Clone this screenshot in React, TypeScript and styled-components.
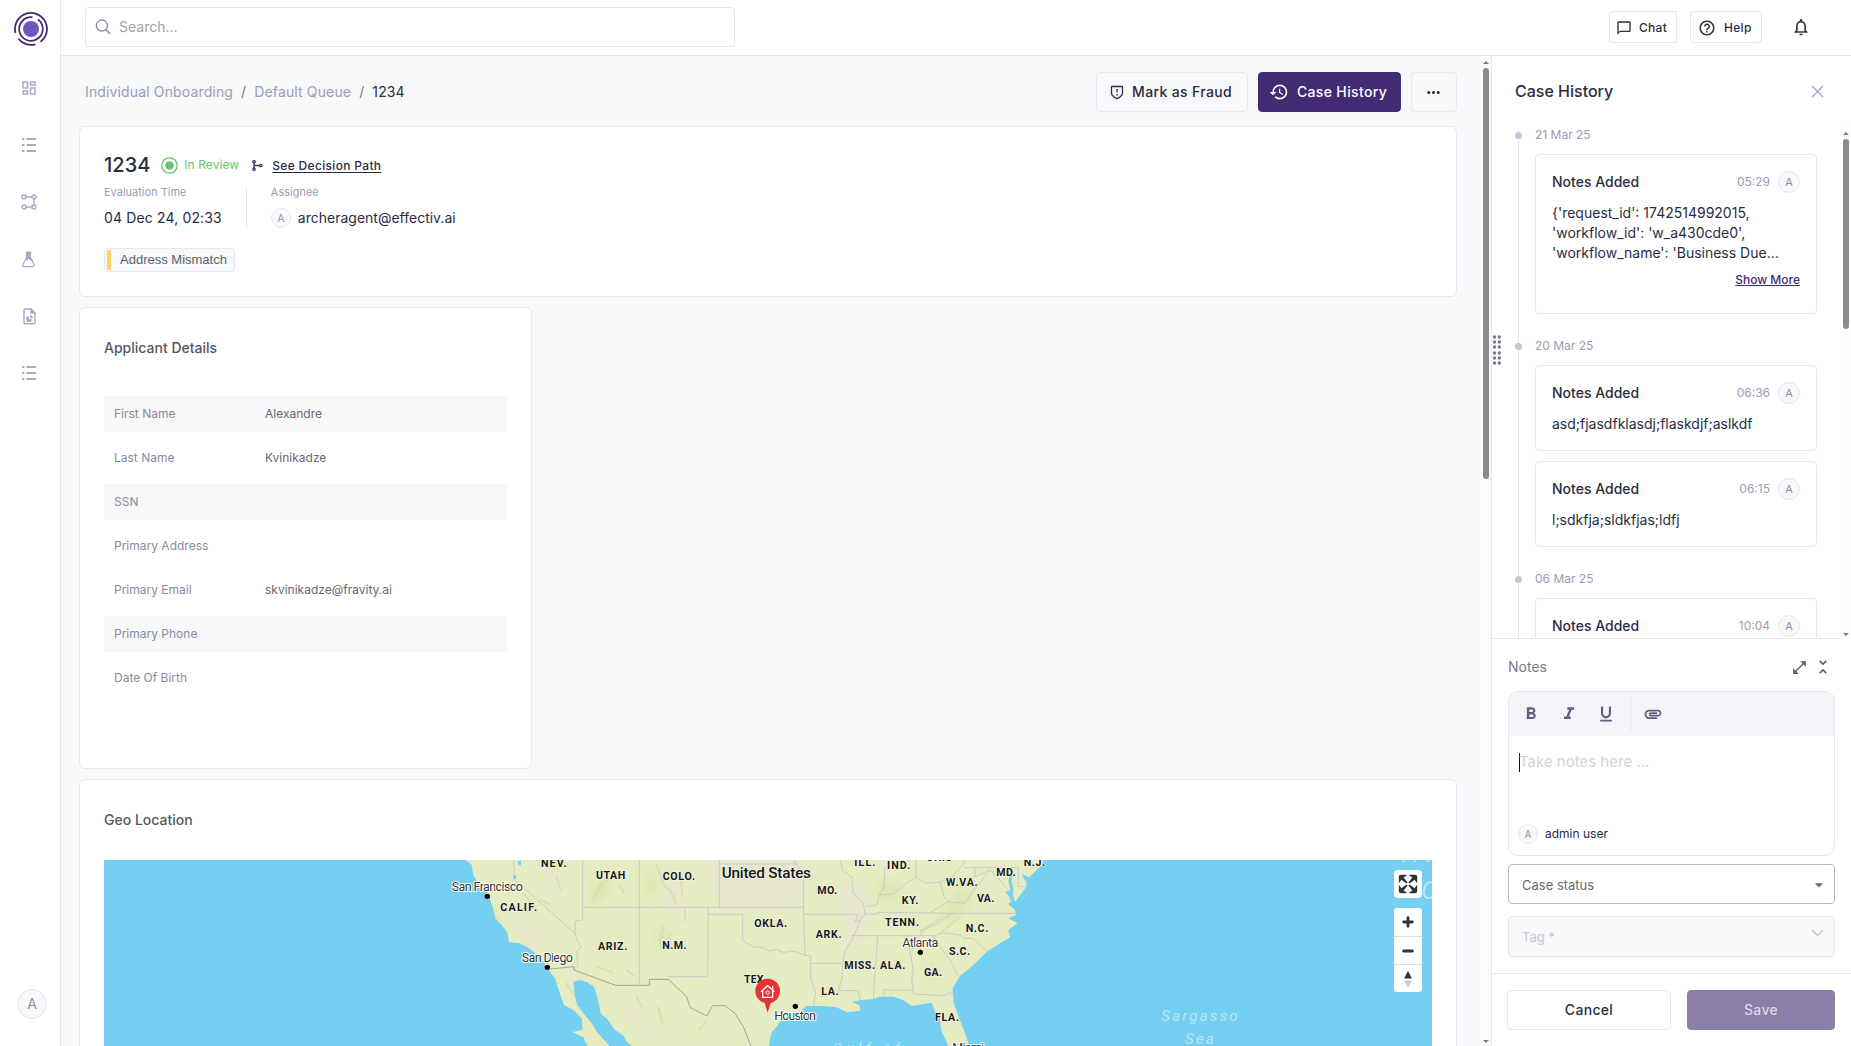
import React from "react";
import styled, { createGlobalStyle, css } from "styled-components";
import {
  MdOutlineDashboard,
  MdChatBubbleOutline,
  MdHelpOutline,
  MdNotificationsNone,
  MdHistory,
  MdMoreHoriz,
  MdFormatBold,
  MdFormatItalic,
  MdFormatUnderlined,
  MdAttachment,
  MdOpenInFull,
  MdUnfoldLess,
  MdArrowDropDown,
} from "react-icons/md";

const line = "#e6e7ef";
const ink = "#2b2d3f";
const muted = "#9a9cb8";
const purple = "#432b74";
const surface = "#f7f8fa";

const GlobalStyle = createGlobalStyle`
  * { box-sizing: border-box; }
  body { margin: 0; background: #fff; font-family: Inter, "Liberation Sans", sans-serif; line-height: 20px; color: ${ink}; }
  button { font-family: inherit; line-height: inherit; padding: 0; margin: 0; cursor: pointer; }
`;

const Shell = styled.div`
  display: grid;
  grid-template-columns: 61px minmax(0, 1fr);
  grid-template-rows: minmax(0, 1fr);
  width: 100vw;
  height: 100vh;
  overflow: hidden;
`;

/* ---------- sidebar ---------- */
const Sidebar = styled.aside`
  display: flex;
  flex-direction: column;
  align-items: center;
  border-right: 1px solid ${line};
  padding: 12px 0 27px;
`;
const Logo = styled.svg`
  width: 34px;
  height: 34px;
  flex: none;
  margin-left: 2px;
`;
const Nav = styled.nav`
  display: flex;
  flex-direction: column;
  gap: 33px;
  margin: 30px 2px 0 0;
  color: #a9abc6;
  flex: 1;
`;
const NavItem = styled.a`
  display: flex;
  width: 24px;
  height: 24px;
  align-items: center;
  justify-content: center;
`;
const Avatar = styled.span<{ $size: number; $font: number }>`
  display: inline-flex;
  flex: none;
  align-items: center;
  justify-content: center;
  width: ${(p) => p.$size}px;
  height: ${(p) => p.$size}px;
  font-size: ${(p) => p.$font}px;
  font-weight: 400;
  line-height: 1;
  border-radius: 50%;
  border: 1px solid ${line};
  background: ${surface};
  color: #8d90ad;
`;
const SidebarAvatar = styled(Avatar)`
  margin-left: 4px;
`;

/* ---------- top bar ---------- */
const Column = styled.div`
  display: grid;
  grid-template-rows: 56px minmax(0, 1fr);
  min-width: 0;
`;
const TopBar = styled.header`
  display: flex;
  align-items: flex-start;
  border-bottom: 1px solid ${line};
  padding: 7px 40px 0 24px;
`;
const SearchBox = styled.div`
  display: flex;
  align-items: center;
  gap: 8px;
  width: 650px;
  height: 40px;
  border: 1px solid ${line};
  border-radius: 4px;
  padding-left: 9px;
  font-size: 14px;
  line-height: 22px;
  color: #a2a2a8;
`;
const TopActions = styled.div`
  display: flex;
  align-items: center;
  margin: 4px 0 0 auto;
  color: #33354a;
`;
const TopButton = styled.button<{ $width: number; $square?: boolean }>`
  display: flex;
  align-items: center;
  width: ${(p) => p.$width}px;
  height: 32px;
  padding: 1px 0 0 6px;
  gap: 7px;
  border: 1px solid ${line};
  border-radius: ${(p) => (p.$square ? "4px 0 0 4px" : "4px")};
  background: #fff;
  color: ${ink};
  font-size: 12px;
  font-weight: 500;
  letter-spacing: 0.3px;
  & + & {
    margin-left: 13px;
    padding-left: 7px;
    gap: 8px;
  }
`;
const Bell = styled.span`
  display: flex;
  margin-left: 29px;
`;

/* ---------- body ---------- */
const Body = styled.div`
  display: grid;
  grid-template-columns: minmax(0, 1fr) 11px 360px;
  grid-template-rows: minmax(0, 1fr);
  min-height: 0;
`;
const Main = styled.main`
  background: ${surface};
  padding: 16px 23px 0 18px;
  overflow: hidden;
  min-height: 0;
`;
const ScrollTrack = styled.div`
  display: flex;
  flex-direction: column;
  align-items: center;
  justify-content: space-between;
  background: #fcfcfc;
  padding: 5px 0 3px;
`;
const ScrollThumb = styled.div<{ $height: number }>`
  width: 6px;
  height: ${(p) => p.$height}px;
  margin: 4px 0 auto;
  border-radius: 3px;
  background: #8b8b8b;
`;
const ScrollArrow = styled.i<{ $down?: boolean }>`
  border: 3px solid transparent;
  ${(p) =>
    p.$down
      ? css`border-top-color: #7d7d7d; border-bottom-width: 0;`
      : css`border-bottom-color: #7d7d7d; border-top-width: 0;`}
`;

const HeadRow = styled.div`
  display: flex;
  align-items: center;
  justify-content: space-between;
  height: 40px;
  padding-left: 6px;
`;
const Crumbs = styled.div`
  display: flex;
  font-size: 14px;
  letter-spacing: 0.14px;
  color: ${muted};
  white-space: pre;
`;
const Slash = styled.span`
  color: #77798c;
  margin: 0 8px;
`;
const CrumbHere = styled.span`
  color: ${ink};
`;
const HeadActions = styled.div`
  display: flex;
  gap: 10px;
`;
const ActionButton = styled.button<{ $width: number; $primary?: boolean }>`
  display: flex;
  align-items: center;
  justify-content: center;
  gap: 8px;
  width: ${(p) => p.$width}px;
  height: 40px;
  padding-right: ${(p) => (p.$primary ? 3 : 2)}px;
  border-radius: 4px;
  border: 1px solid ${(p) => (p.$primary ? purple : line)};
  background: ${(p) => (p.$primary ? purple : surface)};
  color: ${(p) => (p.$primary ? "#fff" : ink)};
  font-size: 14px;
  font-weight: 500;
  letter-spacing: 0.35px;
`;

const Card = styled.section<{ $height: number; $width?: number }>`
  height: ${(p) => p.$height}px;
  width: ${(p) => (p.$width ? `${p.$width}px` : "auto")};
  background: #fff;
  border: 1px solid ${line};
  border-radius: 6px;
  padding: 0 24px;
  margin-bottom: 10px;
`;
const SummaryCard = styled(Card)`
  margin-top: 14px;
`;
const TitleRow = styled.div`
  display: flex;
  align-items: center;
  height: 24px;
  margin-top: 26px;
`;
const CaseTitle = styled.h1`
  margin: 0 11px 0 0;
  padding-top: 1px;
  font-size: 20px;
  font-weight: 500;
  line-height: 25px;
`;
const Status = styled.span`
  display: flex;
  align-items: center;
  gap: 6px;
  font-size: 12px;
  letter-spacing: 0.08px;
  color: #63c76a;
`;
const PathIcon = styled.svg`
  margin: 0 9px 0 13px;
`;
const PathLink = styled.a`
  font-size: 12px;
  font-weight: 500;
  letter-spacing: 0.32px;
  text-decoration: underline;
  text-underline-offset: 2px;
  padding-top: 1px;
`;
const Facts = styled.div`
  display: flex;
  margin-top: 10px;
`;
const Fact = styled.div`
  height: 41px;
  & + & {
    margin-left: 24px;
    padding-left: 24px;
    border-left: 1px solid ${line};
  }
`;
const FactLabel = styled.div`
  font-size: 11px;
  line-height: 11px;
  color: ${muted};
`;
const FactValue = styled.div<{ $spaced?: boolean }>`
  display: flex;
  align-items: center;
  gap: 7px;
  height: 20px;
  margin-top: 10px;
  font-size: 14px;
  letter-spacing: ${(p) => (p.$spaced ? "0.14px" : "normal")};
`;
const RiskTag = styled.span`
  display: inline-flex;
  align-items: center;
  gap: 9px;
  width: 131px;
  height: 24px;
  margin-top: 20px;
  padding-left: 2px;
  border: 1px solid ${line};
  border-radius: 3px;
  background: ${surface};
  color: #5d606b;
  font-family: "Liberation Sans", Arial, sans-serif;
  font-size: 13px;
  &::before {
    content: "";
    width: 4px;
    height: 20px;
    background: #ffd25f;
  }
`;
const SectionTitle = styled.h2`
  margin: 30px 0 0;
  font-size: 14px;
  line-height: 20px;
  font-weight: 500;
  color: #55575f;
`;
const DetailList = styled.dl`
  display: flex;
  flex-direction: column;
  gap: 8px;
  margin: 38px 0 0;
`;
const DetailRow = styled.div<{ $shaded?: boolean }>`
  display: grid;
  grid-template-columns: 151px 1fr;
  align-items: center;
  height: 36px;
  padding-left: 10px;
  background: ${(p) => (p.$shaded ? surface : "#fff")};
  font-size: 12px;
  dt { color: #888b9c; }
  dd { margin: 0; color: #666872; }
`;
const MapFrame = styled.div`
  position: relative;
  height: 190px;
  margin-top: 30px;
  overflow: hidden;
  background: #75cff0;
`;
const MapControls = styled.div`
  position: absolute;
  top: 10px;
  right: 10px;
  display: flex;
  flex-direction: column;
  gap: 10px;
`;
const ControlGroup = styled.div`
  width: 28px;
  border-radius: 4px;
  overflow: hidden;
  background: #fff;
`;
const ControlButton = styled.button`
  display: block;
  width: 28px;
  height: 28px;
  border: 0;
  background: #fff;
  & + & { border-top: 1px solid #ddd; }
  svg { display: block; }
`;

/* ---------- right panel ---------- */
const Panel = styled.aside`
  position: relative;
  display: grid;
  grid-template-rows: 71px 512px minmax(0, 1fr) 73px;
  border-left: 1px solid ${line};
  background: #fff;
  min-height: 0;
`;
const Grip = styled.svg`
  position: absolute;
  left: 0;
  top: 279px;
`;
const PanelHead = styled.div`
  display: flex;
  align-items: center;
  justify-content: space-between;
  padding: 0 27px 1px 23px;
  font-size: 16px;
  font-weight: 500;
`;
const HistoryArea = styled.div`
  display: grid;
  grid-template-columns: minmax(0, 1fr) 10px;
  grid-template-rows: minmax(0, 1fr);
  overflow: hidden;
`;
const HistoryList = styled.div`
  display: flex;
  align-items: flex-start;
  padding-left: 23px;
  border-bottom: 1px solid ${line};
  overflow: hidden;
`;
const Rail = styled.div`
  width: 1px;
  height: 100%;
  margin: 3px 0 0 3px;
  background: ${line};
`;
const Days = styled.div`
  margin-left: -4px;
`;
const Day = styled.div`
  margin-bottom: 24px;
`;
const DayHead = styled.div`
  display: flex;
  align-items: center;
  gap: 13px;
  height: 16px;
  margin-bottom: 11px;
  font-size: 12px;
  color: ${muted};
  &::before {
    content: "";
    width: 7px;
    height: 7px;
    border-radius: 50%;
    background: #c5c5da;
  }
`;
const Entry = styled.article<{ $height: number }>`
  width: 282px;
  height: ${(p) => p.$height}px;
  margin: 0 0 10px 20px;
  padding: 16px 16px 0;
  border: 1px solid ${line};
  border-radius: 4px;
`;
const EntryHead = styled.div`
  display: flex;
  align-items: center;
  height: 22px;
  font-size: 14px;
  font-weight: 500;
`;
const EntryTime = styled.span`
  margin: 0 8px 0 auto;
  font-size: 12px;
  font-weight: 400;
  color: ${muted};
`;
const EntryText = styled.p`
  margin: 10px 0 0;
  font-size: 14px;
  line-height: 20px;
  white-space: pre;
`;
const ShowMore = styled.a`
  display: block;
  margin-top: 9px;
  text-align: right;
  font-size: 12px;
  line-height: 16px;
  font-weight: 500;
  color: ${purple};
  text-decoration: underline;
`;
const NotesArea = styled.div`
  padding: 17px 16px 0;
`;
const NotesHead = styled.div`
  display: flex;
  align-items: center;
  height: 22px;
  padding-right: 2px;
  font-size: 14px;
  color: #777a93;
  svg { color: #5f616b; }
`;
const HeadIcons = styled.span`
  display: flex;
  align-items: center;
  gap: 5px;
  margin-left: auto;
`;
const Editor = styled.div`
  height: 165px;
  margin-top: 13px;
  border: 1px solid ${line};
  border-radius: 10px;
  overflow: hidden;
`;
const EditorBar = styled.div`
  display: flex;
  align-items: center;
  height: 44px;
  padding: 0 12px;
  background: #f4f4f9;
  color: #5f617c;
`;
const EditorTool = styled.span<{ $gap?: number }>`
  display: flex;
  width: 20px;
  justify-content: center;
  margin-right: ${(p) => p.$gap ?? 0}px;
`;
const BarDivider = styled.i`
  width: 1px;
  height: 35px;
  margin-right: 12px;
  background: ${line};
`;
const NoteInput = styled.div`
  display: flex;
  align-items: center;
  height: 20px;
  margin: 16px 0 0 10px;
  font-size: 15px;
  color: #d3d3d8;
  &::before {
    content: "";
    width: 1px;
    height: 19px;
    margin-right: -1px;
    background: #111;
  }
`;
const NoteAuthor = styled.div`
  display: flex;
  align-items: center;
  gap: 7px;
  margin: 52px 0 0 9px;
  font-size: 12px;
`;
const Select = styled.div<{ $disabled?: boolean }>`
  display: flex;
  align-items: center;
  justify-content: space-between;
  height: ${(p) => (p.$disabled ? 41 : 40)}px;
  margin-top: ${(p) => (p.$disabled ? 12 : 8)}px;
  padding: ${(p) => (p.$disabled ? "0 10px 0 13px" : "1px 5px 0 13px")};
  border: 1px solid ${(p) => (p.$disabled ? line : "#b9b9bd")};
  border-radius: 4px;
  background: ${(p) => (p.$disabled ? surface : "#fff")};
  color: ${(p) => (p.$disabled ? "#c5c6da" : "#6b6b70")};
  font-size: 13px;
`;
const Chevron = styled.svg`
  margin-bottom: 7px;
`;
const PanelFoot = styled.footer`
  display: grid;
  grid-template-columns: 164px 148px;
  gap: 16px;
  padding: 16px 0 0 15px;
  border-top: 1px solid ${line};
`;
const FootButton = styled.button<{ $primary?: boolean }>`
  height: 40px;
  border-radius: 4px;
  border: 1px solid ${(p) => (p.$primary ? "#8c7eaa" : line)};
  background: ${(p) => (p.$primary ? "#8c7eaa" : "#fff")};
  color: ${(p) => (p.$primary ? "#dcd7e6" : ink)};
  font-size: 14px;
  font-weight: 500;
  letter-spacing: 0.3px;
`;

/* ---------- icons ---------- */
const SearchIcon = () => (
  <svg width="16" height="16" viewBox="0 0 16 16" fill="none" stroke="#8487a3" strokeWidth="1.3">
    <circle cx="6.9" cy="6.6" r="5.6" />
    <path d="M10.9 10.7 15 14.8" strokeWidth="1.6" />
  </svg>
);
const ListIcon = () => (
  <svg width="14" height="16" viewBox="0 0 14 16" fill="currentColor">
    <path d="M0 1h2.4v2H0zM4.6 1H14v2H4.6zM0 7h2.4v2H0zM4.6 7H14v2H4.6zM0 13h2.4v2H0zM4.6 13H14v2H4.6z" />
  </svg>
);
const FlowIcon = () => (
  <svg width="16" height="16" viewBox="0 0 16 16" fill="none" stroke="currentColor" strokeWidth="1.4">
    <rect x="1.2" y="1.2" width="3.4" height="3.4" />
    <path d="M13 .6 15.4 3 13 5.4 10.6 3z" />
    <circle cx="3" cy="13" r="2" />
    <rect x="11.2" y="11.3" width="3.4" height="3.4" />
    <path d="M4.6 3h6M13 5.4v6M5 13h6.2" />
  </svg>
);
const FlaskIcon = () => (
  <svg width="14" height="17" viewBox="0 0 14 17" fill="none" stroke="currentColor" strokeWidth="1.3">
    <path d="M4.600 1.200v5L1 13.400c-.4 1.400 0 2.300 1.400 2.300h8.200c1.400 0 1.900-1 1.400-2.300L8.400 6.200v-5" />
    <path d="M3.800.4h5.400v1.400h-.4V6.500l1.800 3.600c-.9.400-1.500-.2-2.200-.9L6.500 7.800 4.600 10 4.200 7V1.800h-.4z" fill="currentColor" stroke="none" />
  </svg>
);
const ReportIcon = () => (
  <svg width="13" height="17" viewBox="0 0 13 17" fill="none" stroke="currentColor" strokeWidth="1.4">
    <path d="M1 2.200C1 1.400 1.500 1 2.200 1H8l4 4v9.500c0 .8-.4 1.300-1.200 1.300H2.200c-.8 0-1.200-.5-1.200-1.300z" />
    <path d="M8 1v4h4z" fill="currentColor" />
    <path d="M6 8.300a2.900 2.900 0 1 0 2.900 2.900H6z" fill="currentColor" stroke="none" />
    <path d="M7 7.300v2.900h2.900A2.900 2.900 0 0 0 7 7.300z" fill="currentColor" stroke="none" />
  </svg>
);
const ShieldIcon = () => (
  <svg width="14" height="15" viewBox="0 0 14 15" fill="none" stroke="currentColor" strokeWidth="1.3">
    <path d="M2 1.500h10c.3 0 .5.200.5.500v5.500c0 3-2.200 4.800-5.500 6.200C3.700 12.300 1.500 10.500 1.500 7.500V2c0-.3.200-.5.500-.5z" />
    <path d="M7 4v3.600M7 9v1.500" />
  </svg>
);
const BranchIcon = () => (
  <PathIcon width="11" height="11" viewBox="0 0 11 11" fill="none" stroke={purple} strokeWidth="1.300">
    <circle cx="2" cy="1.800" r="1.200" />
    <circle cx="2" cy="9.200" r="1.200" />
    <circle cx="8.800" cy="5.500" r="1.200" />
    <path d="M2 3v5M2 5.500h5.600" />
  </PathIcon>
);

const stateLabels: [string, number, number, number][] = [
  ["NEV.", 303, 48, 77],
  ["UTAH", 468, 86, 88],
  ["COLO.", 668, 87, 97],
  ["CALIF.", 181, 180, 110],
  ["ARIZ.", 474, 299, 88],
  ["N.M.", 667, 296, 73],
  ["OKLA.", 943, 229, 98],
  ["TEX.", 912, 397, 68],
  ["ILL.", 1243, 45, 63],
  ["IND.", 1341, 56, 70],
  ["OHIO", 1459, 32, 78],
  ["MD.", 1669, 75, 58],
  ["N.J.", 1751, 45, 64],
  ["W.VA.", 1518, 107, 95],
  ["VA.", 1611, 154, 52],
  ["KY.", 1385, 160, 50],
  ["MO.", 1132, 131, 59],
  ["TENN.", 1335, 226, 102],
  ["N.C.", 1577, 243, 68],
  ["S.C.", 1527, 312, 63],
  ["ARK.", 1127, 263, 78],
  ["MISS.", 1213, 355, 92],
  ["ALA.", 1320, 355, 76],
  ["GA.", 1452, 376, 54],
  ["LA.", 1144, 432, 52],
  ["FLA.", 1485, 511, 72],
];
const cities: [string, number, number, number, number, number][] = [
  ["San Francisco", 35, 123, 214, 142, 139],
  ["San Diego", 245, 335, 154, 322, 352],
  ["Atlanta", 1387, 292, 108, 1441, 307],
  ["Houston", 1003, 510, 125, 1066, 469],
];

const GeoMap = () => (
  <svg width="1328" height="190" viewBox="-1008 30 3984 570" style={{ display: "block" }}>
    <defs>
      <clipPath id="landClip">
        <use href="#land" />
      </clipPath>
      <filter id="soft" x="-20%" y="-20%" width="140%" height="140%">
        <feGaussianBlur stdDeviation="14" />
      </filter>
    </defs>
    <path
      id="land"
      fill="#e5ecc1"
      d="M78 30 95 45 100 75 112 95 132 118 148 145 160 175 165 205 185 225 203 250 207 277 240 280 270 296 295 318 310 335 325 360 345 385 358 425 372 465 400 480 425 505 428 540 398 546 430 562 448 600H518L500 578 470 545 455 520 432 492 412 465 405 440 400 395 420 390 440 396 462 410 472 440 482 490 502 508 525 540 550 557 560 575 590 600H986L990 565 996 545 1010 530 1020 515 1050 500 1085 480 1100 468 1150 468 1190 472 1220 487 1262 482 1258 466 1236 455 1265 450 1295 448 1320 440 1360 440 1390 450 1415 468 1450 462 1475 458 1485 485 1500 510 1505 545 1522 580 1526 600H1592L1575 550 1556 500 1541 460 1538 415 1560 378 1600 345 1640 305 1680 280 1710 262 1705 240 1733 220 1705 205 1728 195 1725 180 1705 162 1716 150 1695 125 1712 122 1726 155 1748 125 1758 112 1760 100 1745 72 1768 82 1790 60 1805 45 1812 30Z"
    />
    <g clipPath="url(#landClip)">
      <g filter="url(#soft)" fill="#e9e5d2">
        <path d="M800 20h290v140l-60 20H840zM190 170l60 40 60 60-20 30-70-60zM355 350l80 20 30 60-60-30zM1200 90l80 20 5 120-60 90-10-80z" opacity=".8" />
        <path d="M660 80l60-40 10 130-40 60zM300 60l60 10 20 70-60-20zM560 440l60 60 20 80-60-40z" opacity=".6" />
      </g>
      <g filter="url(#soft)" fill="#d6e2a6">
        <path d="M445 120l50-50 20 60-60 40zM620 50l40 60-20 30-30-40zM140 160l30 30 30 60-30-20zM660 210l30 30-20 60-20-20zM1320 90l60 10-20 60-60-20zM1560 110l50 20-60 80-60 10zM1440 330l60 30-20 60z" opacity=".6" />
      </g>
      <g fill="none" stroke="#d3dcab" strokeWidth="6" strokeLinecap="round">
        <path d="M130 150l30 40 25 45M250 130l20 25M300 150l30 12M350 80l12 40M460 150l25-55M480 110l22-20M540 105l10 22M470 350l50 18M560 360l22 18M650 45l22 60 20 20M720 70l8 70M690 120l18 40M735 180l0 32M660 280l10-50M690 250l-8 30M380 400l30 45M590 440l15 30M655 470l12 50M780 540l20-30M1500 250l60-50M1440 245l60-40" opacity=".7" />
      </g>
      <g fill="none" stroke="#c1c3cb" strokeWidth="2.400">
        <path d="M222 30V88L405 250 412 275 424 290 410 305 414 345 402 358M428 30V210L405 214V250M428 172H1091M598 30V405M838 30V172M838 42H1072M805 172 803 380H682M805 193H908V272L940 290 965 292 990 303 1010 298 1030 308 1050 303 1070 306 1097 316" />
        <path d="M1060 30 1078 55 1090 75V172L1095 315 1112 318V385L1127 430 1120 468M1092 193H1255L1245 213H1260L1240 260 1215 305 1208 340 1205 390 1195 422H1255L1260 450M1112 340H1208M1200 30 1208 62 1235 80 1240 130 1270 160 1275 192 1258 212M1335 50 1332 110 1316 140 1310 165 1278 170M1428 30V82L1400 98 1360 132 1318 135M1428 82 1460 100 1500 96 1512 140 1525 155M1500 96 1535 82 1570 42 1573 30M1525 155 1575 160 1600 122 1650 60 1605 80V52M1573 53H1735V110H1755M1650 60 1680 90 1706 122" />
        <path d="M1275 192H1315V187L1530 190H1728M1470 188 1525 155M1235 257H1480L1510 248 1560 255 1575 265H1600L1640 303M1440 257 1450 240 1490 222 1530 192M1480 257 1500 290 1530 330 1555 378M1313 257 1300 445M1402 257 1420 360 1415 390 1420 420H1330L1335 440M1420 420V432L1517 437 1520 430H1540" />
      </g>
      <path d="M330 357 402 350V360L527 406H628V388H685L740 440 750 472 800 498 818 467H855L885 490 910 530 938 600" fill="none" stroke="#a3a59b" strokeWidth="3" />
      <path d="M233 34l10-2 0 14-8-2zM219 76l8 0 2 10-9 2z" fill="#75cff0" />
      <path d="M1713 75 1710 95 1716 118 1712 150" fill="none" stroke="#75cff0" strokeWidth="9" />
    </g>
    <g fill="#fff" fontFamily="Roboto, sans-serif" fontStyle="italic" opacity=".48">
      <text x="2164" y="512" fontSize="46" textLength="230">Sargasso</text>
      <text x="2236" y="582" fontSize="46" textLength="86">Sea</text>
      <text x="2888" y="36" fontSize="70" textLength="86">At</text>
      <text x="2944" y="148" fontSize="76">O</text>
      <text x="1180" y="606" fontSize="40" textLength="200">Gulf of</text>
    </g>
    <g fill="#15171c" stroke="#f3f5e2" strokeWidth="5" paintOrder="stroke" fontFamily="Roboto, sans-serif" fontWeight="700" fontSize="32">
      {stateLabels.map(([name, x, y, w]) => (
        <text key={name} x={x} y={y + 2} textLength={w}>{name}</text>
      ))}
      <text x="845" y="85" fontSize="46" fontWeight="500" textLength="268">United States</text>
    </g>
    <g fill="#33363d" stroke="#fbfcf5" strokeWidth="6" paintOrder="stroke" fontFamily="Roboto, sans-serif" fontSize="38">
      {cities.map(([name, x, y, w, cx, cy]) => (
        <React.Fragment key={name}>
          <circle cx={cx} cy={cy} r="8" fill="#000" stroke="none" />
          <text x={x} y={y} textLength={w}>{name}</text>
        </React.Fragment>
      ))}
      <text x="1537" y="605" textLength="95">Miami</text>
    </g>
    <g>
      <path d="M972 452h22l-11 36z" fill="#e02f36" />
      <circle cx="983" cy="423" r="37" fill="#e8323a" />
      <path d="M963 425l20-18 20 18M968 422v20h30v-20M998 418v-10" fill="none" stroke="#fff" strokeWidth="4" />
      <circle cx="983" cy="428" r="5" fill="none" stroke="#fff" strokeWidth="3" />
    </g>
  </svg>
);

const details: [string, string, boolean][] = [
  ["First Name", "Alexandre", true],
  ["Last Name", "Kvinikadze", false],
  ["SSN", "", true],
  ["Primary Address", "", false],
  ["Primary Email", "skvinikadze@fravity.ai", false],
  ["Primary Phone", "", true],
  ["Date Of Birth", "", false],
];

type Note = { time: string; text: string; height: number; more?: boolean };
const history: { day: string; notes: Note[] }[] = [
  {
    day: "21 Mar 25",
    notes: [
      {
        time: "05:29",
        text: "{'request_id': 1742514992015,\n'workflow_id': 'w_a430cde0',\n'workflow_name': 'Business Due...",
        height: 160,
        more: true,
      },
    ],
  },
  {
    day: "20 Mar 25",
    notes: [
      { time: "06:36", text: "asd;fjasdfklasdj;flaskdjf;aslkdf", height: 86 },
      { time: "06:15", text: "l;sdkfja;sldkfjas;ldfj", height: 86 },
    ],
  },
  { day: "06 Mar 25", notes: [{ time: "10:04", text: "", height: 86 }] },
];

export default function App() {
  return (
    <Shell>
      <GlobalStyle />
      <Sidebar>
        <Logo viewBox="-17 -17 34 34" fill="none" stroke="#432b74" strokeWidth="1.800">
          <circle r="8" fill="#6d57bb" stroke="none" />
          <path d="M-15.500 4A16 16 0 1 1 9.500 12.800" />
          <path d="M-12.600 9.800A16 16 0 0 0 4.500 15.300" />
          <path d="M1.500-11.700A11.800 11.800 0 1 0 7-9.500" />
        </Logo>
        <Nav>
          <NavItem><MdOutlineDashboard size={18} /></NavItem>
          <NavItem><ListIcon /></NavItem>
          <NavItem><FlowIcon /></NavItem>
          <NavItem><FlaskIcon /></NavItem>
          <NavItem><ReportIcon /></NavItem>
          <NavItem><ListIcon /></NavItem>
        </Nav>
        <SidebarAvatar $size={30} $font={14}>A</SidebarAvatar>
      </Sidebar>
      <Column>
        <TopBar>
          <SearchBox><SearchIcon />Search...</SearchBox>
          <TopActions>
            <TopButton $width={68} $square><MdChatBubbleOutline size={16} />Chat</TopButton>
            <TopButton $width={72}><MdHelpOutline size={18} />Help</TopButton>
            <Bell><MdNotificationsNone size={20} /></Bell>
          </TopActions>
        </TopBar>
        <Body>
          <Main>
            <HeadRow>
              <Crumbs>
                Individual Onboarding<Slash>/</Slash>Default Queue<Slash>/</Slash><CrumbHere>1234</CrumbHere>
              </Crumbs>
              <HeadActions>
                <ActionButton $width={152}><ShieldIcon />Mark as Fraud</ActionButton>
                <ActionButton $width={143} $primary><MdHistory size={20} />Case History</ActionButton>
                <ActionButton $width={46}><MdMoreHoriz size={19} /></ActionButton>
              </HeadActions>
            </HeadRow>
            <SummaryCard $height={171}>
              <TitleRow>
                <CaseTitle>1234</CaseTitle>
                <Status>
                  <svg width="17" height="17" viewBox="0 0 17 17" fill="none" stroke="#63c76a" strokeWidth="1.300">
                    <circle cx="8.500" cy="8.500" r="7.700" />
                    <circle cx="8.500" cy="8.500" r="4.300" fill="#63c76a" stroke="none" />
                  </svg>
                  In Review
                </Status>
                <BranchIcon />
                <PathLink>See Decision Path</PathLink>
              </TitleRow>
              <Facts>
                <Fact>
                  <FactLabel>Evaluation Time</FactLabel>
                  <FactValue $spaced>04 Dec 24, 02:33</FactValue>
                </Fact>
                <Fact>
                  <FactLabel>Assignee</FactLabel>
                  <FactValue><Avatar $size={20} $font={10}>A</Avatar>archeragent@effectiv.ai</FactValue>
                </Fact>
              </Facts>
              <RiskTag>Address Mismatch</RiskTag>
            </SummaryCard>
            <Card $height={462} $width={453}>
              <SectionTitle>Applicant Details</SectionTitle>
              <DetailList>
                {details.map(([label, value, shaded]) => (
                  <DetailRow key={label} $shaded={shaded}>
                    <dt>{label}</dt>
                    <dd>{value}</dd>
                  </DetailRow>
                ))}
              </DetailList>
            </Card>
            <Card $height={500}>
              <SectionTitle>Geo Location</SectionTitle>
              <MapFrame>
                <GeoMap />
                <MapControls>
                  <ControlGroup>
                    <ControlButton>
                      <svg width="28" height="28" viewBox="0 0 29 29" fill="#333"><path d="M24 16v5.500c0 1.750-.75 2.500-2.500 2.500H16v-1l3-1.500-4-5.500 1-1 5.500 4 1.500-3h1zM6 16l1.500 3 5.500-4 1 1-4 5.500 3 1.500v1H7.500C5.750 24 5 23.250 5 21.500V16h1zm7-11v1l-3 1.500 4 5.500-1 1-5.500-4L6 13H5V7.500C5 5.750 5.750 5 7.500 5H13zm11 2.500c0-1.750-.75-2.500-2.500-2.500H16v1l3 1.500-4 5.500 1 1 5.500-4 1.500 3h1V7.500z" /></svg>
                    </ControlButton>
                  </ControlGroup>
                  <ControlGroup>
                    <ControlButton>
                      <svg width="28" height="28" viewBox="0 0 29 29" fill="#333"><path d="M14.500 8.500c-.75 0-1.500.75-1.500 1.500v3h-3c-.75 0-1.500.75-1.500 1.500S9.250 16 10 16h3v3c0 .75.75 1.500 1.500 1.500S16 19.750 16 19v-3h3c.75 0 1.500-.75 1.500-1.500S19.750 13 19 13h-3v-3c0-.75-.75-1.500-1.500-1.500z" /></svg>
                    </ControlButton>
                    <ControlButton>
                      <svg width="28" height="28" viewBox="0 0 29 29" fill="#333"><path d="M10 13c-.75 0-1.500.75-1.500 1.500S9.250 16 10 16h9c.75 0 1.500-.75 1.500-1.500S19.750 13 19 13h-9z" /></svg>
                    </ControlButton>
                    <ControlButton>
                      <svg width="28" height="28" viewBox="0 0 29 29" fill="#333"><path d="M10.500 14l4-8 4 8h-8z" /><path d="M10.500 16l4 8 4-8h-8z" fill="#ccc" /></svg>
                    </ControlButton>
                  </ControlGroup>
                </MapControls>
              </MapFrame>
            </Card>
          </Main>
          <ScrollTrack>
            <ScrollArrow />
            <ScrollThumb $height={411} />
            <ScrollArrow $down />
          </ScrollTrack>
          <Panel>
            <Grip width="10" height="32" fill="#73768f">
              {[2, 7, 12, 18, 23, 28].map((y) => (
                <React.Fragment key={y}>
                  <circle cx="2.500" cy={y} r="1.700" />
                  <circle cx="7.300" cy={y} r="1.700" />
                </React.Fragment>
              ))}
            </Grip>
            <PanelHead>
              Case History
              <svg width="13" height="13" viewBox="0 0 13 13" stroke="#a9abc6" strokeWidth="1.500"><path d="M1 1l11 11M12 1 1 12" /></svg>
            </PanelHead>
            <HistoryArea>
              <HistoryList>
                <Rail />
                <Days>
                  {history.map(({ day, notes }) => (
                    <Day key={day}>
                      <DayHead>{day}</DayHead>
                      {notes.map((n) => (
                        <Entry key={n.time} $height={n.height}>
                          <EntryHead>
                            Notes Added
                            <EntryTime>{n.time}</EntryTime>
                            <Avatar $size={22} $font={11}>A</Avatar>
                          </EntryHead>
                          <EntryText>{n.text}</EntryText>
                          {n.more && <ShowMore>Show More</ShowMore>}
                        </Entry>
                      ))}
                    </Day>
                  ))}
                </Days>
              </HistoryList>
              <ScrollTrack>
                <ScrollArrow />
                <ScrollThumb $height={190} />
                <ScrollArrow $down />
              </ScrollTrack>
            </HistoryArea>
            <NotesArea>
              <NotesHead>
                Notes
                <HeadIcons><MdOpenInFull size={17} /><MdUnfoldLess size={20} /></HeadIcons>
              </NotesHead>
              <Editor>
                <EditorBar>
                  <EditorTool $gap={18}><MdFormatBold size={20} /></EditorTool>
                  <EditorTool $gap={17}><MdFormatItalic size={20} /></EditorTool>
                  <EditorTool $gap={14}><MdFormatUnderlined size={20} /></EditorTool>
                  <BarDivider />
                  <EditorTool><MdAttachment size={20} /></EditorTool>
                </EditorBar>
                <NoteInput>Take notes here ...</NoteInput>
                <NoteAuthor><Avatar $size={20} $font={10}>A</Avatar>admin user</NoteAuthor>
              </Editor>
              <Select>Case status<MdArrowDropDown size={20} /></Select>
              <Select $disabled>
                Tag *
                <Chevron width="13" height="8" viewBox="0 0 13 8" fill="none" stroke="currentColor" strokeWidth="1.500"><path d="M1 1l5.500 5.500L12 1" /></Chevron>
              </Select>
            </NotesArea>
            <PanelFoot>
              <FootButton>Cancel</FootButton>
              <FootButton $primary>Save</FootButton>
            </PanelFoot>
          </Panel>
        </Body>
      </Column>
    </Shell>
  );
}
